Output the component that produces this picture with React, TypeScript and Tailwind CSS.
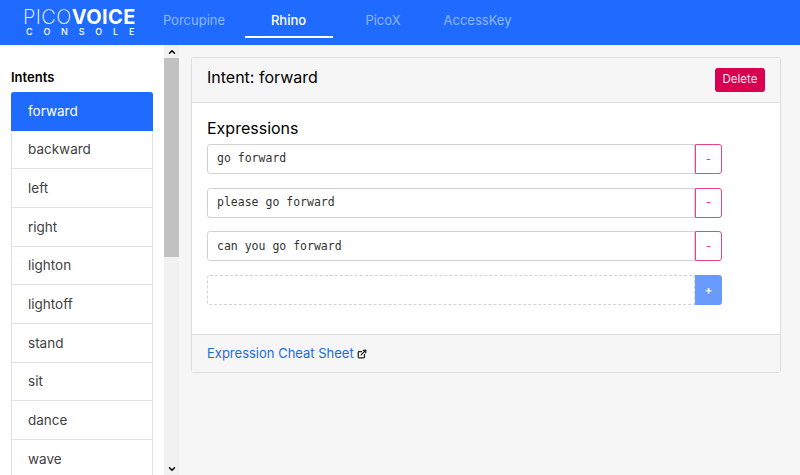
import { ChevronDown, ChevronUp, ExternalLink } from "lucide-react";

const tabs = ["Porcupine", "Rhino", "PicoX", "AccessKey"];
const intents = ["forward", "backward", "left", "right", "lighton", "lightoff", "stand", "sit", "dance", "wave"];
const expressions = ["go forward", "please go forward", "can you go forward"];

export default function App() {
  return (
    <div className="h-[475px] w-[800px] overflow-hidden flex flex-col bg-[#f6f6f6] font-['Inter',sans-serif]">
      {/* Top bar */}
      <header className="h-[45px] shrink-0 bg-[#1f6bff] flex">
        <div className="w-[150px] pl-[23px] pt-[8px] text-white shrink-0">
          <div className="text-[20px] leading-[19px] tracking-[0.4px] whitespace-nowrap">
            <span className="font-extralight">PICO</span>
            <span className="font-bold">VOICE</span>
          </div>
          <div className="text-[9px] leading-[9px] tracking-[10.8px] ml-[3px] font-medium whitespace-nowrap">CONSOLE</div>
        </div>
        <nav className="flex gap-[6.5px]">
          {tabs.map((t) => (
            <div
              key={t}
              className={`w-[88px] h-[38px] flex items-center justify-center pt-[6px] text-[13px] border-b-2 ${
                t === "Rhino" ? "text-white border-white font-medium" : "text-[#8fb6ff] border-transparent"
              }`}
            >
              {t}
            </div>
          ))}
        </nav>
      </header>

      <div className="flex flex-1 min-h-0">
        {/* Sidebar */}
        <aside className="w-[164px] shrink-0 bg-white px-[11px] pt-[24px] overflow-hidden">
          <h2 className="text-[13px] leading-[16px] font-semibold text-black mb-[7px]">Intents</h2>
          <ul className="flex flex-col">
            {intents.map((name, i) => (
              <li
                key={name}
                className={`h-[38.67px] shrink-0 pl-[16px] flex items-center text-[13.5px] border border-t-0 ${
                  i === 0
                    ? "bg-[#1f6bff] text-white border-[#1f6bff] rounded-t-[3px]"
                    : "text-[#3f3f3f] border-[#e2e2e2]"
                }`}
              >
                {name}
              </li>
            ))}
          </ul>
        </aside>

        {/* Scrollbar */}
        <div className="w-[15px] shrink-0 bg-[#f1f1f1] flex flex-col">
          <div className="h-[13px] flex items-center justify-center">
            <ChevronUp className="w-[10px] h-[10px] text-black" strokeWidth={3.5} />
          </div>
          <div className="h-[199px] bg-[#c1c1c1]" />
          <div className="flex-1" />
          <div className="h-[13px] flex items-center justify-center">
            <ChevronDown className="w-[10px] h-[10px] text-black" strokeWidth={3.5} />
          </div>
        </div>

        {/* Main */}
        <main className="flex-1 pl-[12px] pr-[19px] pt-[12px]">
          <section className="border border-[#dedede] rounded-[3px] bg-white">
            <div className="h-[45px] bg-[#f6f6f6] border-b border-[#dedede] flex items-center justify-between pl-[15px] pr-[15px]">
              <h1 className="text-[16px] text-black mt-[-7px]">Intent: forward</h1>
              <button className="w-[50px] h-[24px] rounded-[3px] bg-[#d9004f] text-[#ffe6ef] text-[11.5px]">Delete</button>
            </div>

            <div className="h-[231px] pl-[15px] pt-[16px]">
              <h2 className="text-[16px] leading-[18px] text-black mb-[7px]">Expressions</h2>
              <div className="flex flex-col gap-[13.67px]">
                {expressions.map((ex) => (
                  <div key={ex} className="flex h-[30px] w-[515px]">
                    <div className="flex-1 border border-[#d2d2d2] rounded-l-[3px] pl-[9px] flex items-center font-['DejaVu_Sans_Mono',monospace] text-[11.5px] text-[#333]">
                      {ex}
                    </div>
                    <button className="w-[27px] border border-[#e8457f] rounded-r-[3px] bg-white text-[#e5326f] text-[11px]">-</button>
                  </div>
                ))}
                <div className="flex h-[30px] w-[515px]">
                  <div className="flex-1 border border-dashed border-[#d2d2d2] rounded-l-[3px]" />
                  <button className="w-[27px] bg-[#699bff] rounded-r-[3px] text-white text-[11px] font-bold">+</button>
                </div>
              </div>
            </div>

            <div className="h-[38px] bg-[#f6f6f6] border-t border-[#dedede] pl-[15px] pt-[1px] flex items-center gap-[3px]">
              <a className="text-[13px] text-[#1f6bdc]">Expression Cheat Sheet</a>
              <ExternalLink className="w-[10px] h-[10px] text-[#222]" strokeWidth={3} />
            </div>
          </section>
        </main>
      </div>
    </div>
  );
}
